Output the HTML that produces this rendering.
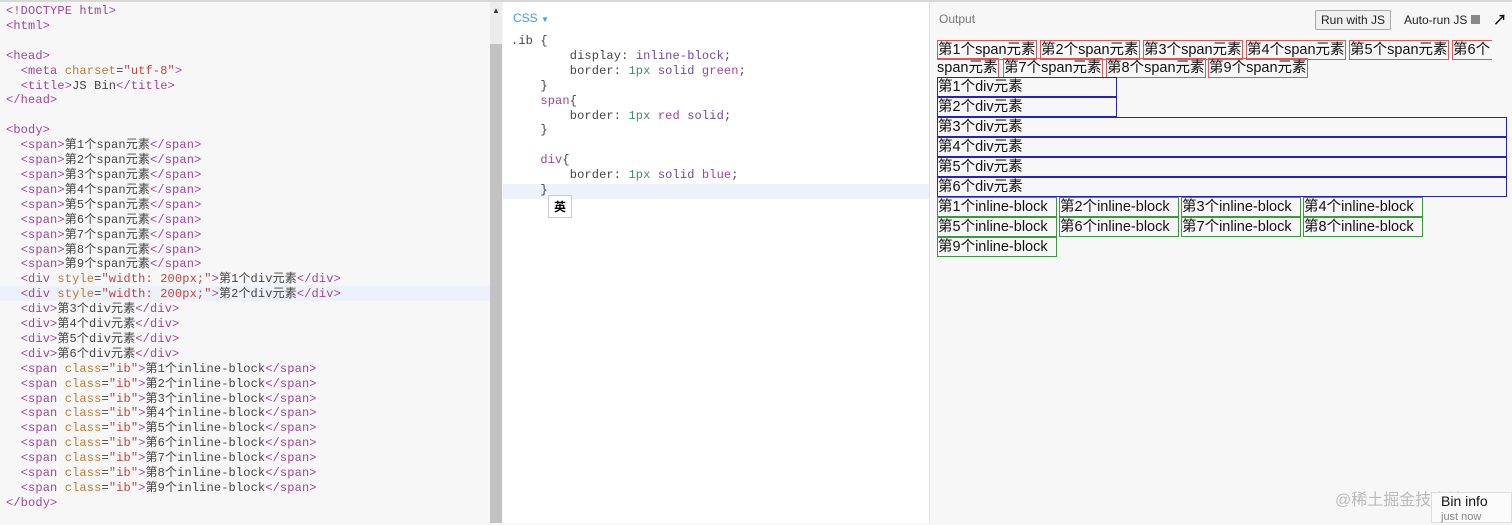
<!DOCTYPE html>
<html><head><meta charset="utf-8"><style>
body{margin:0;width:1512px;height:523px;overflow:hidden;background:#f7f7f7;position:relative;font-family:"Liberation Sans","Noto Sans CJK SC",sans-serif}
.top{position:absolute;left:0;top:0;width:1512px;height:2px;background:#d8d8d8}
.code{position:absolute;margin:0;font-family:"Liberation Mono","Noto Sans CJK SC",monospace;font-size:12px;letter-spacing:0.14px;line-height:14.9px;color:#444;white-space:pre}
.t{color:#a3429f}.a{color:#c07a30}.s{color:#c9423a}.n{color:#3f8f6a}.v{color:#6b4a9b}.k{color:#a3429f}
#html{left:6px;top:4px}
#css{left:511px;top:34px}
.hl{position:absolute;height:15px;background:#edf1f9}
.sb{position:absolute;left:490px;top:44px;width:12px;height:479px;background:#c2c2c2}
.sbt{position:absolute;left:490px;top:2px;width:12px;height:42px;background:#ececec}
.cssp{position:absolute;left:503px;top:2px;width:426px;height:521px;background:#fff;border-right:1px solid #e2e2e2}
.o{position:absolute;font-size:14.5px;line-height:19px;color:#111;white-space:nowrap;box-sizing:border-box;height:20px;padding-left:0;overflow:hidden}
.r{border:1px solid #e05555}.b{border:1px solid #2222cc}.g{border:1px solid #3a9a3a}
</style></head><body>
<div class="top"></div>
<div class="hl" style="left:0;top:286px;width:490px"></div>
<pre class="code" id="html"><span class="t">&lt;!DOCTYPE html&gt;</span>
<span class="t">&lt;html&gt;</span>

<span class="t">&lt;head&gt;</span>
  <span class="t">&lt;meta</span> <span class="a">charset</span>=<span class="s">"utf-8"</span><span class="t">&gt;</span>
  <span class="t">&lt;title&gt;</span>JS Bin<span class="t">&lt;/title&gt;</span>
<span class="t">&lt;/head&gt;</span>

<span class="t">&lt;body&gt;</span>
  <span class="t">&lt;span&gt;</span>第1个span元素<span class="t">&lt;/span&gt;</span>
  <span class="t">&lt;span&gt;</span>第2个span元素<span class="t">&lt;/span&gt;</span>
  <span class="t">&lt;span&gt;</span>第3个span元素<span class="t">&lt;/span&gt;</span>
  <span class="t">&lt;span&gt;</span>第4个span元素<span class="t">&lt;/span&gt;</span>
  <span class="t">&lt;span&gt;</span>第5个span元素<span class="t">&lt;/span&gt;</span>
  <span class="t">&lt;span&gt;</span>第6个span元素<span class="t">&lt;/span&gt;</span>
  <span class="t">&lt;span&gt;</span>第7个span元素<span class="t">&lt;/span&gt;</span>
  <span class="t">&lt;span&gt;</span>第8个span元素<span class="t">&lt;/span&gt;</span>
  <span class="t">&lt;span&gt;</span>第9个span元素<span class="t">&lt;/span&gt;</span>
  <span class="t">&lt;div</span> <span class="a">style</span>=<span class="s">"width: 200px;"</span><span class="t">&gt;</span>第1个div元素<span class="t">&lt;/div&gt;</span>
  <span class="t">&lt;div</span> <span class="a">style</span>=<span class="s">"width: 200px;"</span><span class="t">&gt;</span>第2个div元素<span class="t">&lt;/div&gt;</span>
  <span class="t">&lt;div&gt;</span>第3个div元素<span class="t">&lt;/div&gt;</span>
  <span class="t">&lt;div&gt;</span>第4个div元素<span class="t">&lt;/div&gt;</span>
  <span class="t">&lt;div&gt;</span>第5个div元素<span class="t">&lt;/div&gt;</span>
  <span class="t">&lt;div&gt;</span>第6个div元素<span class="t">&lt;/div&gt;</span>
  <span class="t">&lt;span</span> <span class="a">class</span>=<span class="s">"ib"</span><span class="t">&gt;</span>第1个inline-block<span class="t">&lt;/span&gt;</span>
  <span class="t">&lt;span</span> <span class="a">class</span>=<span class="s">"ib"</span><span class="t">&gt;</span>第2个inline-block<span class="t">&lt;/span&gt;</span>
  <span class="t">&lt;span</span> <span class="a">class</span>=<span class="s">"ib"</span><span class="t">&gt;</span>第3个inline-block<span class="t">&lt;/span&gt;</span>
  <span class="t">&lt;span</span> <span class="a">class</span>=<span class="s">"ib"</span><span class="t">&gt;</span>第4个inline-block<span class="t">&lt;/span&gt;</span>
  <span class="t">&lt;span</span> <span class="a">class</span>=<span class="s">"ib"</span><span class="t">&gt;</span>第5个inline-block<span class="t">&lt;/span&gt;</span>
  <span class="t">&lt;span</span> <span class="a">class</span>=<span class="s">"ib"</span><span class="t">&gt;</span>第6个inline-block<span class="t">&lt;/span&gt;</span>
  <span class="t">&lt;span</span> <span class="a">class</span>=<span class="s">"ib"</span><span class="t">&gt;</span>第7个inline-block<span class="t">&lt;/span&gt;</span>
  <span class="t">&lt;span</span> <span class="a">class</span>=<span class="s">"ib"</span><span class="t">&gt;</span>第8个inline-block<span class="t">&lt;/span&gt;</span>
  <span class="t">&lt;span</span> <span class="a">class</span>=<span class="s">"ib"</span><span class="t">&gt;</span>第9个inline-block<span class="t">&lt;/span&gt;</span>
<span class="t">&lt;/body&gt;</span></pre>
<div class="sbt"></div><div class="sb"></div>
<div style="position:absolute;left:492px;top:6px;font-size:8px;color:#333">▲</div>
<div class="cssp"></div>
<div class="hl" style="left:503px;top:184px;width:426px"></div>
<div style="position:absolute;left:513px;top:11px;font-size:12px;color:#3a9ee8">CSS <span style="font-size:8px">▼</span></div>
<pre class="code" id="css">.ib {
        display: <span class="v">inline-block</span>;
        border: <span class="n">1px</span> <span class="v">solid</span> <span class="k">green</span>;
    }
    <span class="k">span</span>{
        border: <span class="n">1px</span> <span class="k">red</span> <span class="v">solid</span>;
    }

    <span class="k">div</span>{
        border: <span class="n">1px</span> <span class="v">solid</span> <span class="k">blue</span>;
    }</pre>
<div style="position:absolute;left:548px;top:195px;width:24px;height:23px;background:#fff;border:1px solid #ccc;box-sizing:border-box;font-size:12px;font-weight:bold;text-align:center;line-height:21px;font-family:'Noto Sans CJK SC',sans-serif">英</div>

<div style="position:absolute;left:939px;top:12px;font-size:12px;color:#777">Output</div>
<div style="position:absolute;left:1315px;top:10px;width:76px;height:20px;border:1px solid #aaa;border-radius:2px;background:#f0f0f0;box-sizing:border-box;font-size:12px;line-height:18px;text-align:center;color:#222">Run with JS</div>
<div style="position:absolute;left:1404px;top:13px;font-size:12px;color:#222">Auto-run JS <span style="display:inline-block;width:9px;height:9px;background:#888;vertical-align:0"></span></div>
<div style="position:absolute;left:1493px;top:10px;font-size:14px;font-weight:bold;color:#111">↗</div>

<div class="o r" style="left:937px;top:40px;width:100px">第1个span元素</div>
<div class="o r" style="left:1040px;top:40px;width:100px">第2个span元素</div>
<div class="o r" style="left:1143px;top:40px;width:100px">第3个span元素</div>
<div class="o r" style="left:1246px;top:40px;width:100px">第4个span元素</div>
<div class="o r" style="left:1349px;top:40px;width:100px">第5个span元素</div>
<div class="o r" style="left:1452px;top:40px;width:40px;border-right:none">第6个</div>
<div class="o r" style="left:937px;top:58px;width:62px;border-left:none">span元素</div>
<div class="o r" style="left:1003px;top:58px;width:100px">第7个span元素</div>
<div class="o r" style="left:1106px;top:58px;width:100px">第8个span元素</div>
<div class="o r" style="left:1208px;top:58px;width:100px">第9个span元素</div>
<div class="o b" style="left:937px;top:77px;width:180px">第1个div元素</div>
<div class="o b" style="left:937px;top:97px;width:180px">第2个div元素</div>
<div class="o b" style="left:937px;top:117px;width:570px">第3个div元素</div>
<div class="o b" style="left:937px;top:137px;width:570px">第4个div元素</div>
<div class="o b" style="left:937px;top:157px;width:570px">第5个div元素</div>
<div class="o b" style="left:937px;top:177px;width:570px">第6个div元素</div>
<div class="o g" style="left:937px;top:197px;width:120px">第1个inline-block</div>
<div class="o g" style="left:1059px;top:197px;width:120px">第2个inline-block</div>
<div class="o g" style="left:1181px;top:197px;width:120px">第3个inline-block</div>
<div class="o g" style="left:1303px;top:197px;width:120px">第4个inline-block</div>
<div class="o g" style="left:937px;top:217px;width:120px">第5个inline-block</div>
<div class="o g" style="left:1059px;top:217px;width:120px">第6个inline-block</div>
<div class="o g" style="left:1181px;top:217px;width:120px">第7个inline-block</div>
<div class="o g" style="left:1303px;top:217px;width:120px">第8个inline-block</div>
<div class="o g" style="left:937px;top:237px;width:120px">第9个inline-block</div>

<div style="position:absolute;left:1335px;top:486px;font-size:16px;color:#bbb">@稀土掘金技术社区</div>
<div style="position:absolute;left:1431px;top:492px;width:81px;height:31px;background:#fafafa;border:1px solid #ddd;box-sizing:border-box;padding-left:9px;font-size:14px;line-height:16px;color:#111">Bin info<div style="font-size:11px;color:#888">just now</div></div>
</body></html>
